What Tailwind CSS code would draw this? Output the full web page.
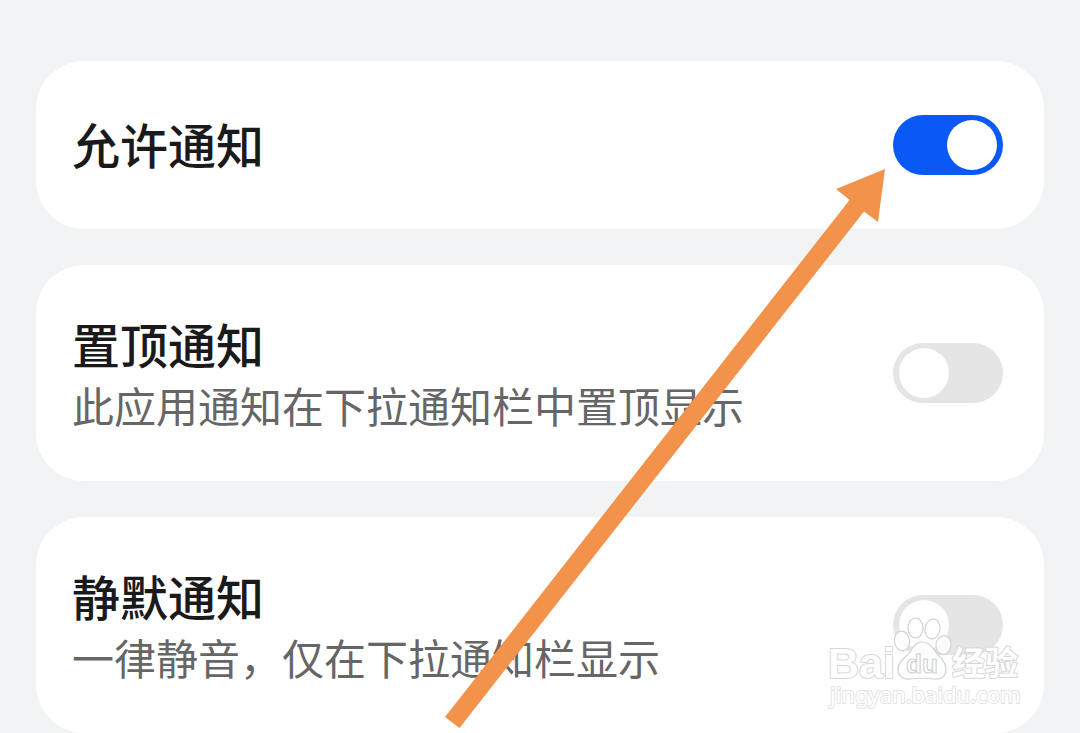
<!DOCTYPE html>
<html lang="zh-CN">
<head>
<meta charset="utf-8">
<meta name="viewport" content="width=device-width, initial-scale=1">
<title>通知</title>
<script src="https://cdn.jsdelivr.net/npm/@tailwindcss/browser@4"></script>
</head>
<body class="bg-[#f1f3f5] font-['Noto_Sans_CJK_SC',sans-serif] text-[#1a1a1a]">
<main class="relative flex flex-col gap-9 px-9 pt-[61px]">
  <label class="flex min-h-[168px] items-center justify-between rounded-[48px] bg-white pr-[41px] pl-9">
    <span class="pb-1 text-5xl leading-[60px] font-medium">允许通知</span>
    <input type="checkbox" role="switch" checked class="flex h-[60px] w-[110px] shrink-0 appearance-none items-center rounded-full bg-[#e5e5e5] px-1.5 before:size-[50px] before:rounded-full before:bg-white checked:justify-end checked:bg-[#0a59f7]">
  </label>
  <label class="flex min-h-[216px] items-center justify-between rounded-[48px] bg-white pr-[41px] pl-9">
    <span class="flex flex-col gap-1">
      <span class="text-5xl leading-[60px] font-medium">置顶通知</span>
      <span class="text-[42px] leading-[56px] text-[#666666]">此应用通知在下拉通知栏中置顶显示</span>
    </span>
    <input type="checkbox" role="switch" class="flex h-[60px] w-[110px] shrink-0 appearance-none items-center rounded-full bg-[#e5e5e5] px-1.5 before:size-[50px] before:rounded-full before:bg-white checked:justify-end checked:bg-[#0a59f7]">
  </label>
  <label class="flex min-h-[216px] items-center justify-between rounded-[48px] bg-white pr-[41px] pl-9">
    <span class="flex flex-col gap-1">
      <span class="text-5xl leading-[60px] font-medium">静默通知</span>
      <span class="text-[42px] leading-[56px] text-[#666666]">一律静音，仅在下拉通知栏显示</span>
    </span>
    <input type="checkbox" role="switch" class="flex h-[60px] w-[110px] shrink-0 appearance-none items-center rounded-full bg-[#e5e5e5] px-1.5 before:size-[50px] before:rounded-full before:bg-white checked:justify-end checked:bg-[#0a59f7]">
  </label>

  <!-- Watermark -->
  <svg class="pointer-events-none absolute right-[50px] bottom-[20px] h-[100px] w-[210px]" viewBox="820 613 210 100" overflow="visible" aria-label="Baidu 经验 jingyan.baidu.com">
    <g fill="#fff" stroke="#d6d6d6" stroke-width="2" stroke-linejoin="round" paint-order="stroke">
      <text x="828" y="678" font-family="Liberation Sans, sans-serif" font-size="43" font-weight="700">Bai</text>
      <text x="952" y="675" font-family="Noto Sans CJK SC, sans-serif" font-size="33" font-weight="700">经验</text>
      <text x="830" y="703" font-family="Noto Sans, sans-serif" font-size="22" stroke="#e4e4e4">jingyan.baidu.com</text>
    </g>
    <g fill="#fff" fill-opacity=".85" stroke="#d2d2d2" stroke-width="1.2" stroke-linejoin="round">
      <ellipse cx="902" cy="641" rx="7.500" ry="10" transform="rotate(-8 902 641)"/>
      <ellipse cx="915.500" cy="628" rx="7.500" ry="10"/>
      <ellipse cx="932.500" cy="629" rx="7.500" ry="10" transform="rotate(10 932.500 629)"/>
      <ellipse cx="943.500" cy="645" rx="7.500" ry="9.500" transform="rotate(8 943.500 645)"/>
      <path d="M922 642c-6 0-9 5-12 10-4 6-12 9-12 17 0 7 5 11 12 10 8-1 16-1 24 0 8 1 12-3 12-10 0-8-7-12-11-18-3-5-7-9-13-9z"/>
    </g>
    <text x="906" y="673" font-family="Liberation Sans, sans-serif" font-size="26" font-weight="700" fill="#fff" stroke="#d2d2d2" stroke-width="1.2">du</text>
  </svg>

  <!-- Arrow pointing to the first switch -->
  <svg class="pointer-events-none absolute right-[195px] bottom-[5px] h-[559px] w-[440px]" viewBox="445 169 440 559" aria-hidden="true">
    <path fill="#f2924b" d="M885 169L836 189L849.500 200L445 717L459.500 728L864 211.500L878 222Z"/>
  </svg>
</main>
</body>
</html>
